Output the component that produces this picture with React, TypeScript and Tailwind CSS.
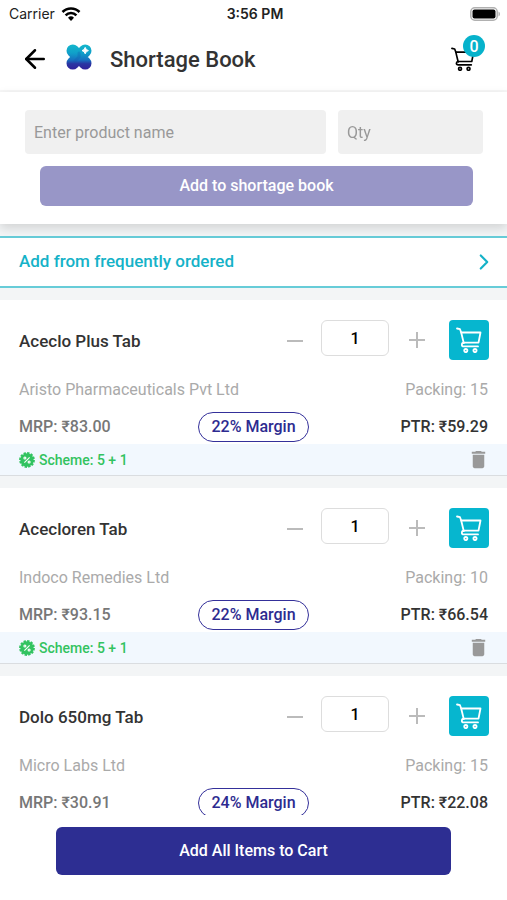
import { ArrowLeft, ChevronRight } from "lucide-react";
import { MdDelete } from "react-icons/md";

type Item = {
  id: string;
  name: string;
  company: string;
  packing: number;
  mrp: string;
  ptr: string;
  margin: number;
  scheme?: string;
};

const items: Item[] = [
  { id: "aceclo", name: "Aceclo Plus Tab", company: "Aristo Pharmaceuticals Pvt Ltd", packing: 15, mrp: "83.00", ptr: "59.29", margin: 22, scheme: "5 + 1" },
  { id: "acecloren", name: "Acecloren Tab", company: "Indoco Remedies Ltd", packing: 10, mrp: "93.15", ptr: "66.54", margin: 22, scheme: "5 + 1" },
  { id: "dolo", name: "Dolo 650mg Tab", company: "Micro Labs Ltd", packing: 15, mrp: "30.91", ptr: "22.08", margin: 24 },
];

function CartIcon({ className }: { className?: string }) {
  return (
    <svg viewBox="0 0 26 26" fill="none" stroke="currentColor" strokeWidth="1.8" strokeLinecap="round" strokeLinejoin="round" className={className} aria-hidden="true">
      <path d="M1 1.500l3 .7 1.200 3.300 2.600 10.700" />
      <path d="M5.200 5.500h19.300l-2 10.200H7.800c-2.600.3-2.600 3.700 0 3.700h14.200" />
      <circle cx="9.800" cy="23.600" r="1.600" />
      <circle cx="19" cy="23.600" r="1.600" />
    </svg>
  );
}

function Logo() {
  return (
    <svg viewBox="0 0 26 26" className="size-[26px]" aria-hidden="true">
      <defs>
        <linearGradient id="logo" x1="0" y1="0" x2="0" y2="26" gradientUnits="userSpaceOnUse">
          <stop offset="0" stopColor="#14b8cc" />
          <stop offset="0.35" stopColor="#10a0c9" />
          <stop offset="0.62" stopColor="#1770c0" />
          <stop offset="0.76" stopColor="#2a35a2" />
          <stop offset="1" stopColor="#31209a" />
        </linearGradient>
      </defs>
      <path d="M6.800 6.800l12.400 12.400M19.200 6.800L6.800 19.200" stroke="url(#logo)" strokeWidth="12.600" strokeLinecap="round" />
      <path d="M13 9v4l-4 4" stroke="#1558ad" strokeOpacity="0.3" strokeWidth="3" strokeLinecap="round" strokeLinejoin="round" fill="none" />
      <path d="M19.200 3.400q.6 2.600 3.200 3.200-2.600.6-3.200 3.200-.6-2.600-3.200-3.200 2.600-.6 3.200-3.200z" fill="#fff" stroke="#fff" strokeWidth="1" strokeLinejoin="round" />
    </svg>
  );
}

function StatusBar() {
  return (
    <div className="grid h-7 grid-cols-3 items-center pl-[9px] pr-1.5 text-sm text-[#222] font-['Inter',sans-serif]">
      <div className="flex items-center gap-1.5">
        <span>Carrier</span>
        <svg viewBox="0 0 20 15" className="h-4 w-5" fill="none" stroke="#000" strokeWidth="2.600" aria-hidden="true">
          <path d="M1.500 5.500a12 12 0 0 1 17 0M4.600 8.800a7.600 7.600 0 0 1 10.800 0" />
          <path d="M10 14.500l-3-3.200a4.300 4.300 0 0 1 6 0z" fill="#000" stroke="none" />
        </svg>
      </div>
      <span className="text-center font-semibold">3:56 PM</span>
      <svg viewBox="0 0 31 14" className="h-3.5 w-[31px] justify-self-end" aria-hidden="true">
        <rect x="0.800" y="0.800" width="26.400" height="12.400" rx="4" fill="#fff" stroke="#b0b0b0" strokeWidth="1.500" />
        <rect x="2.500" y="2.500" width="23" height="9" rx="2" fill="#000" />
        <path d="M28.500 4.500v5c2-1 2-4 0-5z" fill="#b0b0b0" />
      </svg>
    </div>
  );
}

function SchemeIcon() {
  return (
    <svg viewBox="0 0 16 16" className="size-4" aria-hidden="true">
      <circle cx="8" cy="8" r="6.700" fill="currentColor" stroke="currentColor" strokeWidth="2.400" strokeDasharray="2.300 1.200" />
      <g fill="none" stroke="#fff" strokeWidth="1.100">
        <path d="M10.600 5.400l-5.200 5.200" />
        <circle cx="5.900" cy="6" r="1" />
        <circle cx="10.100" cy="10" r="1" />
      </g>
    </svg>
  );
}

function ItemCard({ item }: { item: Item }) {
  return (
    <li className="bg-white pt-5">
      <div className="flex items-start pl-[19px] pr-[18px]">
        <h2 className="flex-1 self-center pt-1 text-[17px] font-medium text-[#333]">{item.name}</h2>
        <button type="button" aria-label={`Decrease ${item.name}`} className="grid h-10 w-5 place-items-center pt-0.5">
          <span className="h-0.5 w-4 bg-[#bbb]" />
        </button>
        <input
          type="text"
          inputMode="numeric"
          aria-label={`Quantity of ${item.name}`}
          defaultValue="1"
          className="mx-4 h-9 w-[68px] rounded-md border border-[#ddd] bg-white text-center text-base font-medium text-black"
        />
        <button type="button" aria-label={`Increase ${item.name}`} className="grid h-10 w-6 place-items-center text-[#bbb]">
          <svg viewBox="0 0 16 16" className="size-4" stroke="currentColor" strokeWidth="2" aria-hidden="true">
            <path d="M8 0v16M0 8h16" />
          </svg>
        </button>
        <button type="button" aria-label={`Add ${item.name} to cart`} className="ml-5 grid size-10 place-items-center rounded bg-[#06b6cf] text-white">
          <CartIcon className="size-[26px]" />
        </button>
      </div>
      <div className="mt-[18px] flex h-6 items-center justify-between px-[19px] text-base text-[#aaa]">
        <span>{item.company}</span>
        <span>Packing: {item.packing}</span>
      </div>
      <div className="mt-2.5 grid h-[30px] grid-cols-[1fr_auto_1fr] items-center px-[19px] text-base font-medium">
        <span className="text-[#777]">MRP: ₹{item.mrp}</span>
        <span className="flex h-[30px] items-center rounded-full border border-[#34309a] px-3 text-[#2d2b90]">{item.margin}% Margin</span>
        <span className="text-right text-[#333]">PTR: ₹{item.ptr}</span>
      </div>
      {item.scheme && (
        <div className="mt-0.5 flex h-8 items-center justify-between border-b border-[#dadde0] bg-[#f2f8fe] pl-[19px] pr-[17px]">
          <span className="flex items-center gap-1 text-sm font-medium text-[#32c360]">
            <SchemeIcon />
            Scheme: {item.scheme}
          </span>
          <button type="button" aria-label={`Remove ${item.name}`} className="text-[#999]">
            <MdDelete className="size-[23px]" />
          </button>
        </div>
      )}
    </li>
  );
}

export default function App() {
  return (
    <div className="flex h-screen flex-col bg-white font-['Roboto',sans-serif]">
      <StatusBar />
      <header className="flex h-16 items-center border-b-2 border-[#f7f7f7] pl-5 pr-8">
        <button type="button" aria-label="Back">
          <ArrowLeft className="size-[30px] text-black" strokeWidth={2} />
        </button>
        <div className="ml-4 pb-1">
          <Logo />
        </div>
        <h1 className="ml-[18px] flex-1 text-[22px] font-medium text-[#333]">Shortage Book</h1>
        <button type="button" aria-label="Cart, 0 items" className="relative text-black">
          <CartIcon className="size-6" />
          <span className="absolute -right-2.5 -top-3 grid size-[22px] place-items-center rounded-full bg-[#06b2cb] text-base font-medium text-white">0</span>
        </button>
      </header>

      <form className="relative z-10 bg-white py-[18px] pl-[25px] pr-6 shadow-[0_4px_10px_rgba(0,0,0,0.14)]">
        <div className="flex gap-3">
          <input type="text" aria-label="Product name" placeholder="Enter product name" className="h-11 min-w-0 flex-1 rounded bg-[#f0f0f0] px-[9px] text-base placeholder:text-[#999]" />
          <input type="text" aria-label="Quantity" placeholder="Qty" className="h-11 w-[145px] rounded bg-[#f0f0f0] px-[9px] text-base placeholder:text-[#999]" />
        </div>
        <div className="pl-[15px] pr-2.5 pt-3">
          <button type="button" className="h-10 w-full rounded-md bg-[#9896c7] text-base font-medium text-white">Add to shortage book</button>
        </div>
      </form>

      <main className="min-h-0 flex-1 overflow-y-auto bg-[#f3f5f6] pt-3 [scrollbar-width:none]">
        <button type="button" className="flex h-[52px] w-full items-center justify-between border-y-2 border-[#67ccd8] bg-white pl-[19px] pr-2.5 text-[17px] font-medium text-[#15b2c8]">
          Add from frequently ordered
          <ChevronRight className="size-[26px]" />
        </button>
        <ul className="flex flex-col gap-3 pt-3">
          {items.map((item) => (
            <ItemCard key={item.id} item={item} />
          ))}
        </ul>
      </main>

      <footer className="px-14 pb-[25px] pt-3">
        <button type="button" className="h-12 w-full rounded-md bg-[#2d2e92] text-base font-medium text-white">Add All Items to Cart</button>
      </footer>
    </div>
  );
}
